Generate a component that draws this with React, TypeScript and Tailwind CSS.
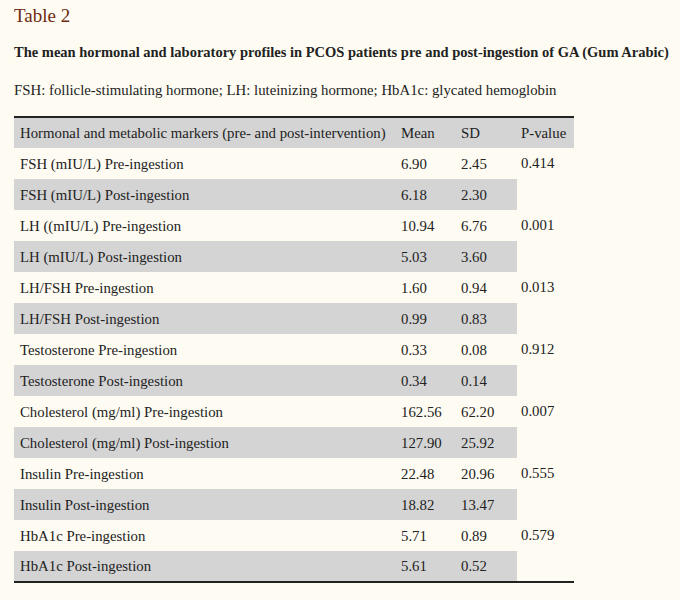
const rows: { label: string; mean: string; sd: string; p?: string }[][] = [
  [
    { label: 'FSH (mIU/L) Pre-ingestion', mean: '6.90', sd: '2.45', p: '0.414' },
    { label: 'FSH (mIU/L) Post-ingestion', mean: '6.18', sd: '2.30' },
  ],
  [
    { label: 'LH ((mIU/L) Pre-ingestion', mean: '10.94', sd: '6.76', p: '0.001' },
    { label: 'LH (mIU/L) Post-ingestion', mean: '5.03', sd: '3.60' },
  ],
  [
    { label: 'LH/FSH Pre-ingestion', mean: '1.60', sd: '0.94', p: '0.013' },
    { label: 'LH/FSH Post-ingestion', mean: '0.99', sd: '0.83' },
  ],
  [
    { label: 'Testosterone Pre-ingestion', mean: '0.33', sd: '0.08', p: '0.912' },
    { label: 'Testosterone Post-ingestion', mean: '0.34', sd: '0.14' },
  ],
  [
    { label: 'Cholesterol (mg/ml) Pre-ingestion', mean: '162.56', sd: '62.20', p: '0.007' },
    { label: 'Cholesterol (mg/ml) Post-ingestion', mean: '127.90', sd: '25.92' },
  ],
  [
    { label: 'Insulin Pre-ingestion', mean: '22.48', sd: '20.96', p: '0.555' },
    { label: 'Insulin Post-ingestion', mean: '18.82', sd: '13.47' },
  ],
  [
    { label: 'HbA1c Pre-ingestion', mean: '5.71', sd: '0.89', p: '0.579' },
    { label: 'HbA1c Post-ingestion', mean: '5.61', sd: '0.52' },
  ],
];

export default function App() {
  return (
    <div className="min-h-[600px] bg-[#fefcf2] px-[14px] pt-[4px] text-[#222] font-['Liberation_Serif',serif]">
      <h2 className="text-[19px] leading-[23px] text-[#6e2a12]">Table 2</h2>
      <p className="mt-[16px] text-[14.5px] font-bold leading-[18px] whitespace-nowrap">
        The mean hormonal and laboratory profiles in PCOS patients pre and post-ingestion of GA (Gum Arabic)
      </p>
      <p className="mt-[20px] text-[14.8px] leading-[18px]">
        FSH: follicle-stimulating hormone; LH: luteinizing hormone; HbA1c: glycated hemoglobin
      </p>

      <table className="mt-[17px] border-collapse border-t-2 border-b-2 border-[#222] text-[14.8px] leading-[18px]">
        <thead>
          <tr className="h-[31px] bg-[#d4d4d4]">
            <th className="w-[383px] px-[6px] text-left font-normal whitespace-nowrap">
              Hormonal and metabolic markers (pre- and post-intervention)
            </th>
            <th className="w-[60px] px-[4px] text-left font-normal">Mean</th>
            <th className="w-[60px] px-[4px] text-left font-normal">SD</th>
            <th className="w-[57px] px-[4px] text-left font-normal">P-value</th>
          </tr>
        </thead>
        <tbody>
          {rows.map((pair) =>
            pair.map((r, i) => (
              <tr key={r.label} className="h-[31px]">
                <td className={`px-[6px] ${i === 1 ? 'bg-[#d4d4d4]' : ''}`}>{r.label}</td>
                <td className={`px-[4px] ${i === 1 ? 'bg-[#d4d4d4]' : ''}`}>{r.mean}</td>
                <td className={`px-[4px] ${i === 1 ? 'bg-[#d4d4d4]' : ''}`}>{r.sd}</td>
                {i === 0 && (
                  <td rowSpan={2} className="px-[4px] align-top pt-[6px]">
                    {r.p}
                  </td>
                )}
              </tr>
            ))
          )}
        </tbody>
      </table>
    </div>
  );
}
